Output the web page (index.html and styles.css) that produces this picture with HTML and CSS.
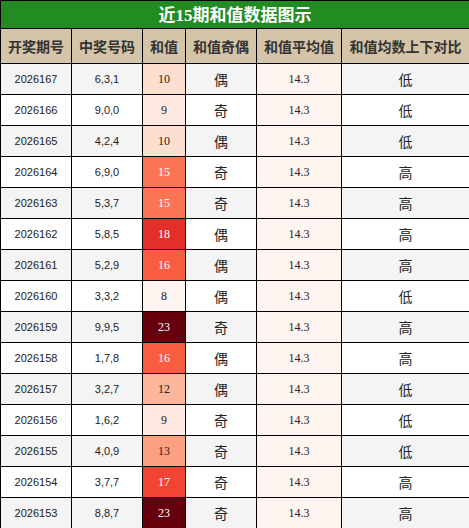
FILE: index.html
```html
<!DOCTYPE html>
<html lang="zh-CN">
<head>
    <meta charset="UTF-8">
    <meta name="viewport" content="width=device-width, initial-scale=1.0">
    <title>近15期和值数据图示</title>
    <link rel="stylesheet" href="styles.css">
</head>
<body>

    <table class="sum-table">
        <colgroup>
            <col class="c-issue">
            <col class="c-nums">
            <col class="c-sum">
            <col class="c-parity">
            <col class="c-avg">
            <col class="c-cmp">
        </colgroup>
        <thead>
            <tr>
                <th class="title" colspan="6">近<span class="title-num">15</span>期和值数据图示</th>
            </tr>
            <tr class="head">
                <th>开奖期号</th>
                <th>中奖号码</th>
                <th>和值</th>
                <th>和值奇偶</th>
                <th>和值平均值</th>
                <th>和值均数上下对比</th>
            </tr>
        </thead>
        <tbody id="rows"></tbody>
    </table>

    <script>
        const draws = [
            ["2026167", "6,3,1", 10],
            ["2026166", "9,0,0", 9],
            ["2026165", "4,2,4", 10],
            ["2026164", "6,9,0", 15],
            ["2026163", "5,3,7", 15],
            ["2026162", "5,8,5", 18],
            ["2026161", "5,2,9", 16],
            ["2026160", "3,3,2", 8],
            ["2026159", "9,9,5", 23],
            ["2026158", "1,7,8", 16],
            ["2026157", "3,2,7", 12],
            ["2026156", "1,6,2", 9],
            ["2026155", "4,0,9", 13],
            ["2026154", "3,7,7", 17],
            ["2026153", "8,8,7", 23]
        ];

        // Reds colour scale
        const reds = [
            [255, 245, 240], [254, 224, 210], [252, 187, 161],
            [252, 146, 114], [251, 106, 74], [239, 59, 44],
            [203, 24, 29], [165, 15, 21], [103, 0, 13]
        ];

        function heat(t) {
            const pos = t * (reds.length - 1);
            const i = Math.min(Math.floor(pos), reds.length - 2);
            const f = pos - i;
            const c = reds[i].map((v, k) => Math.round(v + (reds[i + 1][k] - v) * f));
            return `rgb(${c[0]}, ${c[1]}, ${c[2]})`;
        }

        const sums = draws.map(d => d[2]);
        const min = Math.min(...sums);
        const max = Math.max(...sums);
        const avg = 14.3;
        const body = document.getElementById("rows");

        draws.forEach(([issue, nums, sum]) => {
            const t = (sum - min) / (max - min);
            const tr = document.createElement("tr");
            tr.innerHTML = `
                <td class="txt">${issue}</td>
                <td class="txt">${nums}</td>
                <td class="num${t > 0.4 ? " light" : ""}" style="background-color: ${heat(t)}">${sum}</td>
                <td class="cn">${sum % 2 ? "奇" : "偶"}</td>
                <td class="num avg">${avg}</td>
                <td class="cn">${sum > avg ? "高" : "低"}</td>`;
            body.appendChild(tr);
        });
    </script>

</body>
</html>
```

FILE: styles.css
```css
body {
    margin: 0;
    padding: 0;
    background-color: #fff;
    font-family: "Noto Sans CJK SC", sans-serif;
    color: #222;
}

.sum-table {
    width: 469px;
    table-layout: fixed;
    border-collapse: collapse;
}

.c-issue, .c-nums, .c-parity {
    width: 71px;
}

.c-sum {
    width: 43px;
}

.c-avg {
    width: 85px;
}

.c-cmp {
    width: 128px;
}

.sum-table th,
.sum-table td {
    border: 1px solid #000;
    padding: 0;
    text-align: center;
    overflow: hidden;
    white-space: nowrap;
}

.title {
    height: 25px;
    background-color: #228b22;
    color: #fff;
    font-size: 17px;
    font-weight: bold;
    line-height: 25px;
}

.title-num {
    font-family: "Liberation Serif", serif;
}

.head th {
    height: 34px;
    background-color: #d4c4a8;
    color: #333;
    font-size: 14px;
    font-weight: bold;
}

.sum-table td {
    height: 30px;
}

.sum-table tbody tr:nth-child(odd) {
    background-color: #f4f4f4;
}

.txt {
    font-family: "Liberation Sans", sans-serif;
    font-size: 11px;
}

.cn {
    font-size: 14px;
}

.num {
    font-family: "Liberation Serif", serif;
    font-size: 12px;
}

.num.light {
    color: #fff;
}

.avg {
    background-color: #fff5f0;
}
```
